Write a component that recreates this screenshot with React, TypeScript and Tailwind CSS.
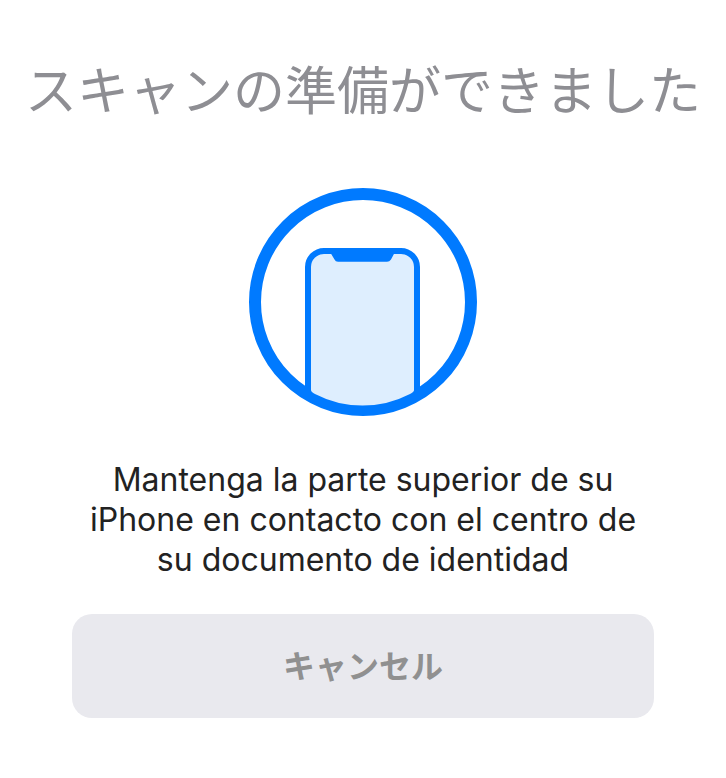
export default function App() {
  return (
    <main className="flex min-h-screen flex-col items-center bg-white font-['Inter','Noto_Sans_CJK_JP',sans-serif]">
      <h1 className="mt-[50px] text-center font-['Noto_Sans_CJK_JP',sans-serif] text-[52px] leading-[76px] font-normal whitespace-nowrap text-[#8e8e93]">
        スキャンの準備ができました
      </h1>
      <svg className="mt-[62px] size-[228px]" viewBox="0 0 228 228" fill="none" aria-hidden="true">
        <defs>
          <clipPath id="ring">
            <circle cx="114" cy="114" r="109" />
          </clipPath>
        </defs>
        <g clipPath="url(#ring)">
          <rect x="59" y="63" width="109" height="190" rx="16" fill="#deeefe" stroke="#007aff" strokeWidth="6" />
          <path d="M81 64H146L142 71.500Q140.500 73.700 138 73.700H89Q86.500 73.700 85.500 71.500Z" fill="#007aff" />
        </g>
        <circle cx="114" cy="114" r="108" stroke="#007aff" strokeWidth="12" />
        <path d="M62 150V202Q62 204 66 206A103 103 0 0 0 161 206Q165 204 165 202V150Z" fill="#deeefe" />
      </svg>
      <p className="mt-[44px] w-full max-w-[582px] px-4 text-center text-[32px] leading-[40px] text-[#222222]">
        Mantenga la parte superior de su iPhone en contacto con el centro de su documento de identidad
      </p>
      <div className="mt-[34px] w-full px-[72px]">
        <button
          type="button"
          className="h-[104px] w-full rounded-[20px] bg-[#e9e9ee] pb-1 font-['Noto_Sans_CJK_JP',sans-serif] text-[32px] font-bold text-[#909090]"
        >
          キャンセル
        </button>
      </div>
    </main>
  );
}
